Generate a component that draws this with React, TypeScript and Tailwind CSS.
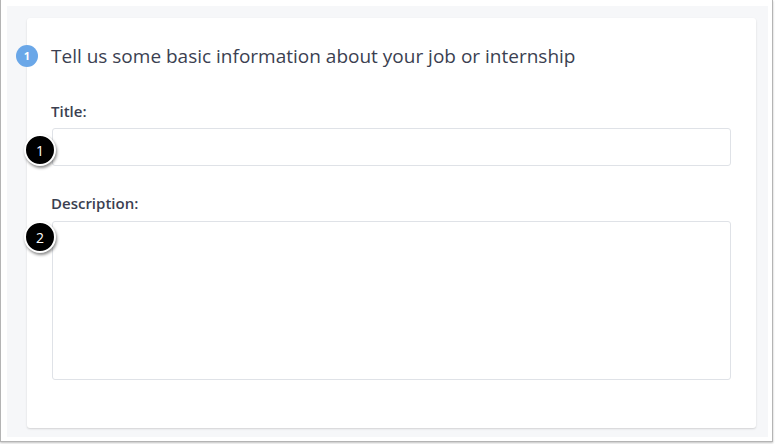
function Callout({ n }: { n: number }) {
  return (
    <div className="flex h-[32px] w-[32px] items-center justify-center rounded-full border-2 border-white bg-black text-[14px] text-white shadow-[1px_2px_3px_rgba(0,0,0,0.45)]">
      {n}
    </div>
  );
}

export default function App() {
  return (
    <div className="h-[444px] w-[775px] bg-white font-['Open_Sans',sans-serif]">
      <div className="h-[442px] w-[773px] border-x border-b border-[#b4b4b4] pt-[6px] pl-[6px] pr-[4px] pb-[4px] shadow-[0_1px_2px_rgba(0,0,0,0.25)]">
        <div className="h-full w-full bg-[#f6f7f9] pt-[12px] pl-[20px] pr-[12px] pb-[8px]">
          <div className="relative h-[410px] w-[729px] rounded-[3px] bg-white pl-[24px] pr-[24px] shadow-[0_1px_2px_rgba(0,0,0,0.15)]">
            <div className="relative flex items-center pt-[26px]">
              <div className="absolute left-[-35px] top-[27px] flex h-[22px] w-[22px] items-center justify-center rounded-full bg-[#6aa7e8] text-[11px] font-bold text-white">
                1
              </div>
              <h2 className="text-[19px] font-medium leading-[24px] text-[#3b3f51]">
                Tell us some basic information about your job or internship
              </h2>
            </div>
            <div className="mt-[34px] text-[15px] font-semibold leading-[18px] text-[#3b3f51]">
              Title:
            </div>
            <div className="relative mt-[8px] pl-[1px]">
              <div className="h-[38px] w-[679px] rounded-[3px] border border-[#dfe2e7] bg-white" />
              <div className="absolute left-[-27px] top-[6px]">
                <Callout n={1} />
              </div>
            </div>
            <div className="mt-[28px] text-[15px] font-semibold leading-[18px] text-[#3b3f51]">
              Description:
            </div>
            <div className="relative mt-[9px] pl-[1px]">
              <div className="h-[159px] w-[679px] rounded-[3px] border border-[#dfe2e7] bg-white" />
              <div className="absolute left-[-27px] top-0">
                <Callout n={2} />
              </div>
            </div>
          </div>
        </div>
      </div>
    </div>
  );
}
